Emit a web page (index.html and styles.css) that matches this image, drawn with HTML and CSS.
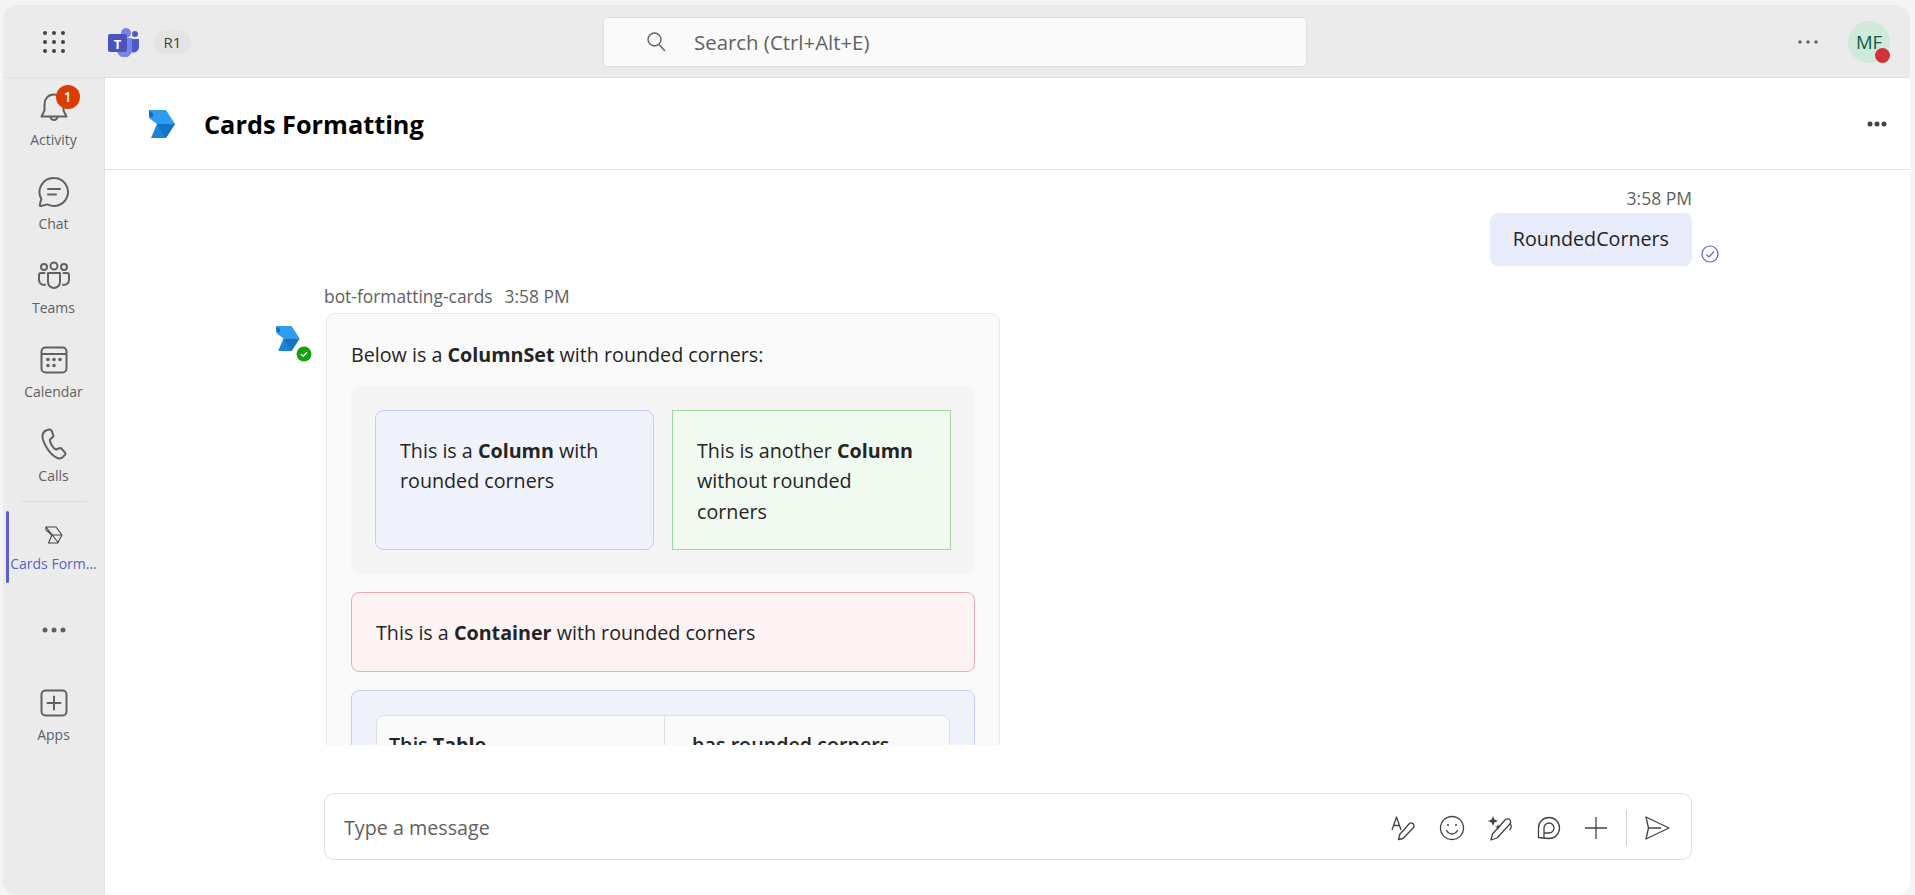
FILE: index.html
```html
<!DOCTYPE html>
<html lang="en">
<head>
    <meta charset="UTF-8">
    <title>Cards Formatting</title>
    <link rel="stylesheet" href="styles.css">
</head>
<body>
    <div class="window">
        <!-- top bar -->
        <header class="topbar">
            <div class="topbar-left">
                <svg class="waffle" width="24" height="24" viewBox="0 0 24 24" fill="#424242">
                    <circle cx="3" cy="3" r="2"/><circle cx="12" cy="3" r="2"/><circle cx="21" cy="3" r="2"/>
                    <circle cx="3" cy="12" r="2"/><circle cx="12" cy="12" r="2"/><circle cx="21" cy="12" r="2"/>
                    <circle cx="3" cy="21" r="2"/><circle cx="12" cy="21" r="2"/><circle cx="21" cy="21" r="2"/>
                </svg>
                <svg class="teams-logo" width="31" height="29" viewBox="0 0 31 29">
                    <circle cx="27" cy="6" r="3" fill="#5059c9"/>
                    <path d="M20 11h11v8a5.500 5.500 0 0 1-11 0z" fill="#5059c9"/>
                    <circle cx="18" cy="5" r="5" fill="#7b83eb"/>
                    <path d="M9 10h15v12a7.500 7.500 0 0 1-15 0z" fill="#7b83eb"/>
                    <rect x="0" y="6" width="19" height="18" rx="2" fill="#4b53bc"/>
                    <text x="9.500" y="20.500" text-anchor="middle" class="teams-t">T</text>
                </svg>
                <span class="ring-pill">R1</span>
            </div>
            <div class="search">
                <svg width="22" height="22" viewBox="0 0 22 22" fill="none" stroke="#616161" stroke-width="1.400">
                    <circle cx="9.500" cy="8.500" r="6.500"/><path d="M14 13.500l6 6.500"/>
                </svg>
                <span>Search (Ctrl+Alt+E)</span>
            </div>
            <div class="topbar-right">
                <svg width="20" height="4" viewBox="0 0 20 4" fill="#616161">
                    <circle cx="2" cy="2" r="1.700"/><circle cx="10" cy="2" r="1.700"/><circle cx="18" cy="2" r="1.700"/>
                </svg>
                <div class="avatar">MF<span class="presence"></span></div>
            </div>
        </header>

        <div class="app-body">
            <!-- left rail -->
            <nav class="rail">
                <a class="rail-item">
                    <span class="rail-icon">
                        <svg width="30" height="32" viewBox="0 0 30 32" fill="none" stroke="#616161" stroke-width="2" stroke-linejoin="round">
                            <path d="M15 2.500c-6 0-9.500 4.500-9.500 10v6L2.500 24.500h25l-3-6v-6c0-5.500-3.500-10-9.500-10z"/>
                            <path d="M11.500 24.500a3.500 3.500 0 0 0 7 0"/>
                        </svg>
                        <span class="badge">1</span>
                    </span>
                    <span class="rail-label">Activity</span>
                </a>
                <a class="rail-item">
                    <span class="rail-icon">
                        <svg width="32" height="32" viewBox="0 0 32 32" fill="none" stroke="#616161" stroke-width="2" stroke-linecap="round" stroke-linejoin="round">
                            <path d="M16 2a14 14 0 1 1-6.500 26.400L3 30c-.8.200-1.400-.5-1.200-1.200l1.500-6A14 14 0 0 1 16 2z"/>
                            <path d="M10 13h12M10 18.500h8"/>
                        </svg>
                    </span>
                    <span class="rail-label">Chat</span>
                </a>
                <a class="rail-item">
                    <span class="rail-icon">
                        <svg width="32" height="30" viewBox="0 0 32 30" fill="none" stroke="#616161" stroke-width="2" stroke-linecap="round" stroke-linejoin="round">
                            <circle cx="16" cy="5" r="3.500"/><circle cx="6" cy="6" r="3"/><circle cx="26" cy="6" r="3"/>
                            <path d="M10 12h12v9a6 6 0 0 1-12 0z"/>
                            <path d="M6.500 12H3a2 2 0 0 0-2 2v5a5 5 0 0 0 6 4.800"/>
                            <path d="M25.500 12H29a2 2 0 0 1 2 2v5a5 5 0 0 1-6 4.800"/>
                        </svg>
                    </span>
                    <span class="rail-label">Teams</span>
                </a>
                <a class="rail-item">
                    <span class="rail-icon">
                        <svg width="28" height="28" viewBox="0 0 28 28" fill="none" stroke="#616161" stroke-width="2">
                            <rect x="1.500" y="1.500" width="25" height="25" rx="4"/>
                            <path d="M1.500 8h25"/>
                            <g fill="#616161" stroke="none">
                                <circle cx="8" cy="13.500" r="1.800"/><circle cx="14" cy="13.500" r="1.800"/><circle cx="20" cy="13.500" r="1.800"/>
                                <circle cx="8" cy="19.500" r="1.800"/><circle cx="14" cy="19.500" r="1.800"/>
                            </g>
                        </svg>
                    </span>
                    <span class="rail-label">Calendar</span>
                </a>
                <a class="rail-item">
                    <span class="rail-icon">
                        <svg width="26" height="32" viewBox="0 0 26 32" fill="none" stroke="#616161" stroke-width="2" stroke-linejoin="round">
                            <path d="M5 2.500l3-1c1.200-.3 2.200.3 2.700 1.400l1.500 4c.4 1-.1 2-1 2.700L9 11.500c-.4 1 .6 3.700 1.800 5.700s3.200 4.300 4.400 4.300l3-1.200c1-.4 2.100 0 2.800.8l2.800 3.200c.8 1 .7 2.200-.2 3l-2 1.900c-1.400 1.200-3.400 1.600-5.200.8-4-1.800-7.800-5.500-10.500-10S1 11 1.600 7c.3-2 1.600-3.800 3.400-4.500z"/>
                        </svg>
                    </span>
                    <span class="rail-label">Calls</span>
                </a>
                <div class="rail-divider"></div>
                <a class="rail-item rail-item-active">
                    <span class="rail-icon rail-icon-small">
                        <svg width="18" height="18" viewBox="0 0 18 18" fill="none" stroke="#424242" stroke-width="1.100" stroke-linejoin="round">
                            <path d="M1 1h10l6 8-4.500 8H3.500L7 9 1 4z"/>
                            <path d="M7 9h10M1 1l12.500 16"/>
                        </svg>
                    </span>
                    <span class="rail-label">Cards Form...</span>
                </a>
                <a class="rail-more">
                    <svg width="24" height="6" viewBox="0 0 24 6" fill="#616161">
                        <circle cx="3" cy="3" r="2.500"/><circle cx="12" cy="3" r="2.500"/><circle cx="21" cy="3" r="2.500"/>
                    </svg>
                </a>
                <a class="rail-item">
                    <span class="rail-icon">
                        <svg width="28" height="28" viewBox="0 0 28 28" fill="none" stroke="#616161" stroke-width="2" stroke-linecap="round">
                            <rect x="1.500" y="1.500" width="25" height="25" rx="4"/>
                            <path d="M14 7.500v13M7.500 14h13"/>
                        </svg>
                    </span>
                    <span class="rail-label">Apps</span>
                </a>
            </nav>

            <main class="main">
                <div class="chat-header">
                    <svg class="bot-logo" width="26" height="28" viewBox="0 0 26 28">
                        <path d="M0 0h17l9 14H8L0 8z" fill="#2f9cf1"/>
                        <path d="M0 0l4 3.500V7l-4-.5z" fill="#0f6cbd"/>
                        <path d="M8 14h18l-9 14H2z" fill="#1a84d8"/>
                        <path d="M8 14h18l-9 14z" fill="#0f6cbd" opacity=".65"/>
                    </svg>
                    <h1 class="chat-title">Cards Formatting</h1>
                    <svg class="header-more" width="20" height="6" viewBox="0 0 20 6" fill="#424242">
                        <circle cx="3" cy="3" r="2.500"/><circle cx="10" cy="3" r="2.500"/><circle cx="17" cy="3" r="2.500"/>
                    </svg>
                </div>

                <div class="messages">
                    <div class="msg-row">
                        <div class="own-msg">
                            <span class="msg-time">3:58 PM</span>
                            <div class="bubble">RoundedCorners</div>
                        </div>
                        <svg class="sent-check" width="18" height="18" viewBox="0 0 18 18" fill="none" stroke="#5b5fc7" stroke-width="1.200">
                            <circle cx="9" cy="9" r="8"/><path d="M5.500 9.500l2.500 2.500 5-5.500"/>
                        </svg>
                    </div>

                    <div class="msg-row msg-row-bot">
                        <div class="bot-avatar">
                            <svg width="24" height="25" viewBox="0 0 26 28">
                                <path d="M0 0h17l9 14H8L0 8z" fill="#2f9cf1"/>
                                <path d="M0 0l4 3.500V7l-4-.5z" fill="#0f6cbd"/>
                                <path d="M8 14h18l-9 14H2z" fill="#1a84d8"/>
                                <path d="M8 14h18l-9 14z" fill="#0f6cbd" opacity=".65"/>
                            </svg>
                            <svg class="bot-status" width="16" height="16" viewBox="0 0 16 16">
                                <circle cx="8" cy="8" r="7.500" fill="#13a10e"/>
                                <path d="M5 8.200l2.200 2L11 6.200" fill="none" stroke="#fff" stroke-width="1.500"/>
                            </svg>
                        </div>
                        <div class="bot-msg">
                            <div class="msg-meta">
                                <span>bot-formatting-cards</span>
                                <span>3:58 PM</span>
                            </div>
                            <div class="card">
                                <p class="card-text">Below is a <b>ColumnSet</b> with rounded corners:</p>
                                <div class="column-set">
                                    <div class="column column-rounded">This is a <b>Column</b> with rounded corners</div>
                                    <div class="column column-square">This is another <b>Column</b> without rounded corners</div>
                                </div>
                                <div class="container-red">This is a <b>Container</b> with rounded corners</div>
                                <div class="container-blue">
                                    <div class="card-table">
                                        <div class="cell">This <b>Table</b></div>
                                        <div class="cell cell-second">has rounded corners</div>
                                    </div>
                                </div>
                            </div>
                        </div>
                    </div>
                </div>

                <div class="composer">
                    <span class="composer-text">Type a message</span>
                    <div class="composer-tools">
                        <svg width="26" height="26" viewBox="0 0 26 26" fill="none" stroke="#424242" stroke-width="1.300" stroke-linejoin="round">
                            <path d="M2 15L6.500 2 11 15M3.500 10.500h6"/>
                            <path d="M8.500 24.500l1.200-5L19 9c1.200-1.300 3-1.300 4.200-.2s1.100 3-.1 4.200L13 23.500z"/>
                        </svg>
                        <svg width="26" height="26" viewBox="0 0 26 26" fill="none" stroke="#424242" stroke-width="1.300" stroke-linecap="round">
                            <circle cx="13" cy="13" r="11.500"/>
                            <path d="M7.500 15.500c1.500 2.500 3.500 3.500 5.500 3.500s4-1 5.500-3.500"/>
                            <circle cx="9" cy="10" r="1" fill="#424242" stroke="none"/><circle cx="17" cy="10" r="1" fill="#424242" stroke="none"/>
                        </svg>
                        <svg width="26" height="26" viewBox="0 0 26 26" fill="none" stroke="#424242" stroke-width="1.300" stroke-linejoin="round">
                            <path d="M3 25l1.500-6L17 5c1.500-1.500 4-1.500 5 0s1 3-.5 4.500L9 23z"/>
                            <path d="M22 9c2 1 1.500 4-.5 6"/>
                            <path d="M5 1l1.400 3.600L10 6 6.400 7.400 5 11 3.600 7.400 0 6l3.600-1.400zM10 9l.8 2.200L13 12l-2.200.8L10 15l-.8-2.200L7 12l2.200-.8z" fill="#424242" stroke="none"/>
                        </svg>
                        <svg width="24" height="24" viewBox="0 0 24 24" fill="none" stroke="#424242" stroke-width="1.300" stroke-linejoin="round">
                            <path d="M1.500 21.500V12a10.500 10.500 0 1 1 10.500 10.500z"/>
                            <path d="M7 22v-10a5 5 0 1 1 5 5H7"/>
                        </svg>
                        <svg width="24" height="24" viewBox="0 0 24 24" fill="none" stroke="#424242" stroke-width="1.300">
                            <path d="M12 1v22M1 12h22"/>
                        </svg>
                        <span class="tools-divider"></span>
                        <svg width="26" height="26" viewBox="0 0 26 26" fill="none" stroke="#424242" stroke-width="1.300" stroke-linejoin="round">
                            <path d="M2 2l23 11L2 24l2.500-11zM4.500 13H17"/>
                        </svg>
                    </div>
                </div>
            </main>
        </div>
    </div>
</body>
</html>
```

FILE: styles.css
```css
* {
    box-sizing: border-box;
}

body {
    margin: 0;
    height: 895px;
    overflow: hidden;
    background-color: #f5f5f5;
    font-family: "Open Sans", sans-serif;
    font-size: 19.7px;
    color: #242424;
}

b {
    font-weight: 700;
}

.window {
    display: flex;
    flex-direction: column;
    height: 890px;
    margin: 5px 5px 0 3px;
    border-radius: 14px;
    background-color: #ebebeb;
    overflow: hidden;
}

/* top bar */
.topbar {
    display: grid;
    grid-template-columns: 600px 704px 1fr;
    align-items: center;
    flex: 0 0 73px;
    padding-top: 2px;
    border-bottom: 1px solid #e0e0e0;
}

.topbar-left {
    display: flex;
    align-items: center;
    padding-left: 39px;
}

.teams-logo {
    margin-left: 42px;
}

.teams-t {
    font-size: 13px;
    font-weight: 700;
    fill: #fff;
}

.ring-pill {
    width: 37px;
    height: 24px;
    margin-left: 15px;
    border-radius: 12px;
    background-color: #e4e4e4;
    font-size: 15px;
    line-height: 24px;
    text-align: center;
    color: #424242;
}

.search {
    display: flex;
    align-items: center;
    gap: 27px;
    height: 50px;
    padding-left: 41px;
    border: 1px solid #e0e0e0;
    border-radius: 5px;
    background-color: #fafafa;
    font-size: 20.4px;
    color: #616161;
}

.topbar-right {
    display: flex;
    align-items: center;
    justify-content: flex-end;
    gap: 30px;
    padding-right: 20px;
}

.avatar {
    position: relative;
    width: 42px;
    height: 42px;
    border-radius: 50%;
    background-color: #cfe9db;
    color: #0e5c3f;
    font-size: 18.500px;
    line-height: 42px;
    text-align: center;
}

.presence {
    position: absolute;
    right: 0;
    bottom: 0;
    width: 15px;
    height: 15px;
    border-radius: 50%;
    background-color: #d13438;
}

/* layout below the top bar */
.app-body {
    display: flex;
    flex: 1;
    min-height: 0;
}

.rail {
    flex: 0 0 102px;
    border-right: 1px solid #e0e0e0;
    padding-top: 8px;
}

.rail-item {
    position: relative;
    display: flex;
    flex-direction: column;
    align-items: center;
    height: 84px;
    color: #616161;
}

.rail-icon {
    position: relative;
    display: flex;
    align-items: center;
    justify-content: center;
    height: 44px;
}

.rail-label {
    font-size: 14px;
    line-height: 20px;
    white-space: nowrap;
}

.badge {
    position: absolute;
    top: -1px;
    left: 17px;
    width: 24px;
    height: 24px;
    border-radius: 50%;
    background-color: #dc3c00;
    color: #fff;
    font-size: 13.500px;
    font-weight: 600;
    line-height: 24px;
    text-align: center;
}

.rail-divider {
    width: 66px;
    height: 1px;
    margin: -5px 0 9px 18px;
    background-color: #dcdcdc;
}

.rail-item-active {
    height: 72px;
    color: #5b5fc7;
}

.rail-item-active::before {
    content: "";
    position: absolute;
    left: 3px;
    top: 0;
    width: 3px;
    height: 72px;
    border-radius: 2px;
    background-color: #5b5fc7;
}

.rail-icon-small {
    height: 30px;
    margin-top: 9px;
    margin-bottom: 4px;
}

.rail-more {
    display: flex;
    align-items: center;
    justify-content: center;
    height: 40px;
    margin-top: 27px;
    margin-bottom: 31px;
}

/* main column */
.main {
    display: flex;
    flex-direction: column;
    flex: 1;
    min-width: 0;
    background-color: #fff;
}

.chat-header {
    display: flex;
    align-items: center;
    flex: 0 0 92px;
    padding: 0 23px 0 44px;
    border-bottom: 1px solid #e0e0e0;
}

.chat-title {
    flex: 1;
    margin: 1px 0 0 29px;
    font-size: 25.300px;
    font-weight: 700;
    color: #000;
}

.messages {
    flex: 0 0 575px;
    padding: 17px 0 0 171px;
    overflow: hidden;
}

.msg-row {
    display: grid;
    grid-template-columns: 50px 1366px 40px;
}

.own-msg {
    grid-column: 2;
    display: flex;
    flex-direction: column;
    align-items: flex-end;
    gap: 4px;
}

.msg-time {
    font-size: 17.500px;
    line-height: 22px;
    color: #616161;
}

.bubble {
    height: 53px;
    padding: 0 23px;
    border-radius: 8px;
    background-color: #e8ebfa;
    line-height: 52px;
}

.sent-check {
    grid-column: 3;
    align-self: end;
    margin: 0 0 3px 9px;
}

.msg-row-bot {
    margin-top: 19px;
}

.bot-avatar {
    position: relative;
    padding-top: 41px;
}

.bot-status {
    position: absolute;
    left: 20px;
    top: 61px;
}

.msg-meta {
    display: flex;
    gap: 12px;
    margin-left: -2px;
    font-size: 17.400px;
    line-height: 22px;
    color: #616161;
}

.card {
    width: 674px;
    margin-top: 6px;
    padding: 26px 24px 24px;
    border: 1px solid #e8e8e8;
    border-radius: 9px;
    background-color: #fafafa;
}

.card-text {
    margin: 0 0 16px;
    line-height: 30px;
}

.column-set {
    display: grid;
    grid-template-columns: 279px 279px;
    gap: 18px;
    padding: 24px;
    border-radius: 8px;
    background-color: #f5f5f5;
}

.column {
    height: 140px;
    padding: 25px 24px;
    line-height: 30.300px;
}

.column-rounded {
    border: 1px solid #c5cbfa;
    border-radius: 8px;
    background-color: #f0f3fc;
}

.column-square {
    border: 1px solid #9fd89f;
    background-color: #f1faf1;
}

.container-red {
    height: 80px;
    margin-top: 18px;
    padding: 0 24px;
    border: 1px solid #eeacb2;
    border-radius: 8px;
    background-color: #fdf3f4;
    line-height: 80px;
}

.container-blue {
    margin-top: 18px;
    padding: 24px;
    border: 1px solid #c5cbfa;
    border-radius: 8px;
    background-color: #f0f3fc;
}

.card-table {
    display: grid;
    grid-template-columns: 287px 287px;
    border: 1px solid #e0e0e0;
    border-radius: 8px;
    background-color: #fafafa;
}

.cell {
    padding: 14px 12px;
    font-weight: 600;
    line-height: 30px;
}

.cell-second {
    padding-left: 27px;
    border-left: 1px solid #e0e0e0;
}

/* compose box */
.composer {
    display: flex;
    align-items: center;
    justify-content: space-between;
    width: 1368px;
    height: 67px;
    margin: 48px 0 0 219px;
    padding: 2px 21px 0 19px;
    border: 1px solid #e0e0e0;
    border-radius: 10px;
    background-color: #fff;
}

.composer-text {
    color: #616161;
}

.composer-tools {
    display: flex;
    align-items: center;
    gap: 23px;
}

.tools-divider {
    width: 1px;
    height: 36px;
    margin: 0 -6px 0 -5px;
    background-color: #d1d1d1;
}
```
